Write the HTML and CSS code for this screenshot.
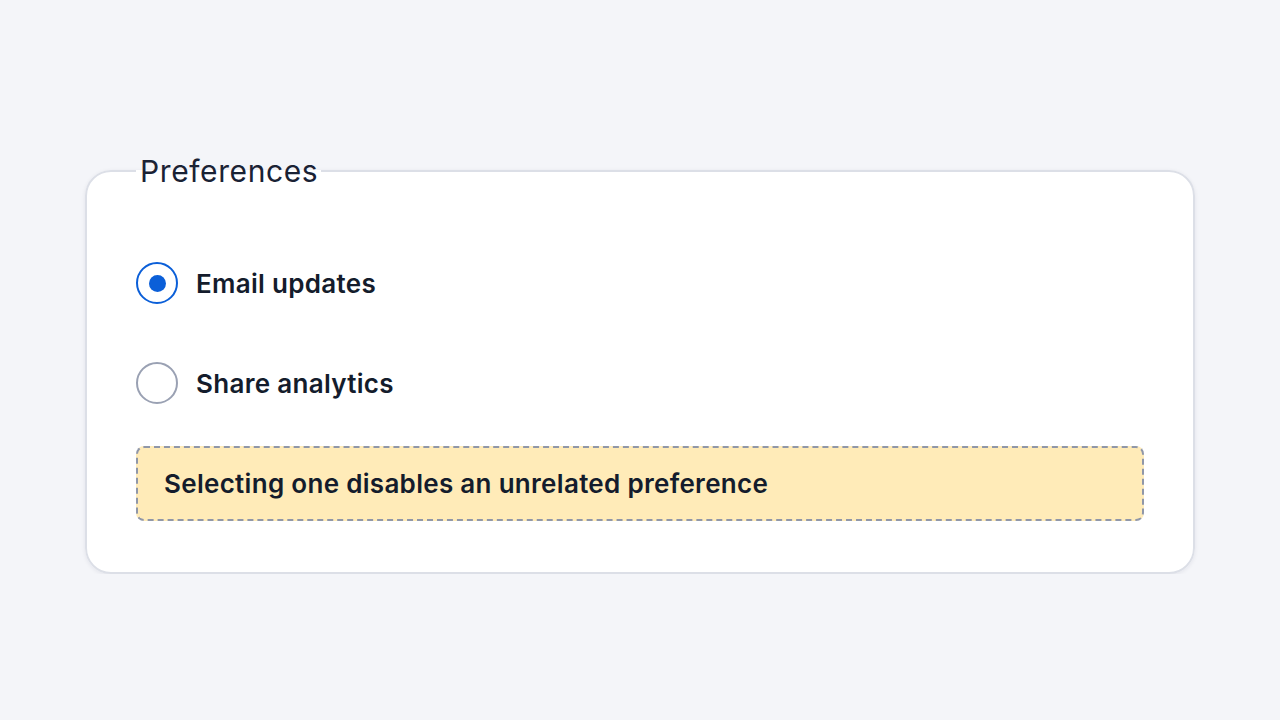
FILE: index.html
```html
<!DOCTYPE html>
<html>
  <head>
    <title>Preferences</title>
    <link rel="stylesheet" href="styles.css">
  </head>
  <body>
    <div class="page">
      <fieldset class="prefs">
        <legend>Preferences</legend>
        <div class="stack">
          <label class="option">
            <input type="radio" name="pref" checked>
            <span class="dot"></span>
            <span class="option-text">Email updates</span>
          </label>
          <label class="option">
            <input type="radio" name="pref">
            <span class="dot"></span>
            <span class="option-text">Share analytics</span>
          </label>
          <div class="note">Selecting one disables an unrelated preference</div>
        </div>
      </fieldset>
    </div>
  </body>
</html>
```

FILE: styles.css
```css
* {
  box-sizing: border-box;
}
body {
  margin: 0;
  background: #f4f5f9;
  font-family: Inter, "Noto Sans", sans-serif;
  color: #141c2c;
}
.page {
  padding: 153px 85px 0;
}
.prefs {
  margin: 0;
  border: 2px solid #dcdfe7;
  border-radius: 26px;
  background: #fff;
  padding: 57px 49px 51px;
  box-shadow: 0 1px 4px rgba(20, 30, 60, .08);
}
.prefs legend {
  padding: 0 3px 0 4px;
  font-size: 30px;
  line-height: 36px;
  font-weight: 400;
  letter-spacing: 0.6px;
  color: #1a2234;
}
.stack {
  display: flex;
  flex-direction: column;
  gap: 26px;
}
.option {
  display: flex;
  align-items: center;
  gap: 18px;
  min-height: 74px;
  cursor: pointer;
}
.option input {
  display: none;
}
.dot {
  width: 42px;
  height: 42px;
  border-radius: 50%;
  border: 2px solid #9aa1b3;
  display: flex;
  align-items: center;
  justify-content: center;
  flex: none;
}
.option input:checked + .dot {
  border-color: #0b5fd8;
}
.option input:checked + .dot::after {
  content: "";
  width: 17px;
  height: 17px;
  border-radius: 50%;
  background: #0b5fd8;
}
.option-text {
  font-size: 26px;
  font-weight: 600;
  letter-spacing: 0.3px;
}
.note {
  min-height: 75px;
  display: flex;
  align-items: center;
  padding: 0 26px;
  background: #ffebb8;
  border: 2px dashed #9097a8;
  border-radius: 8px;
  font-size: 26px;
  font-weight: 600;
  letter-spacing: 0.3px;
}
```
